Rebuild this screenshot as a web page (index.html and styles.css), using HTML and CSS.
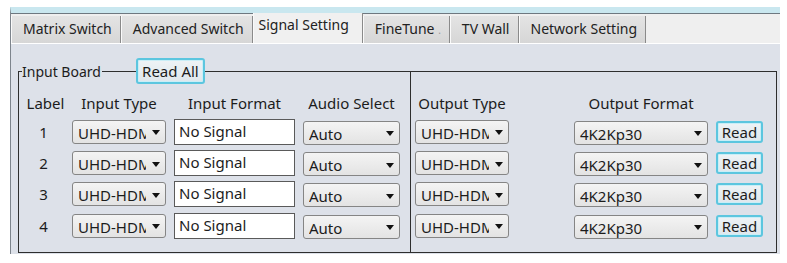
FILE: index.html
```html
<!DOCTYPE html>
<html lang="en">
<head>
    <meta charset="UTF-8">
    <title>Signal Setting</title>
    <link rel="stylesheet" href="styles.css">
</head>
<body>
    <div class="window">
        <div class="tabs">
            <div class="tab">Matrix Switch</div>
            <div class="tab">Advanced Switch</div>
            <div class="tab active">Signal Setting</div>
            <div class="tab">FineTune <span class="dot">.</span></div>
            <div class="tab">TV Wall</div>
            <div class="tab">Network Setting</div>
        </div>

        <div class="panel">
            <div class="group">
                <div class="group-head">
                    <span class="edge left"></span>
                    <span class="group-title">Input Board</span>
                    <span class="rule short"></span>
                    <button class="btn read-all">Read All</button>
                    <span class="rule fill"></span>
                    <span class="edge right"></span>
                </div>

                <div class="group-body">
                    <div class="side input-side">
                        <div class="head label-col">Label</div>
                        <div class="head">Input Type</div>
                        <div class="head">Input Format</div>
                        <div class="head">Audio Select</div>

                        <div class="num">1</div>
                        <div class="select"><span class="value">UHD-HDMI</span><span class="arrow"></span></div>
                        <div class="textbox">No Signal</div>
                        <div class="select audio"><span class="value">Auto</span><span class="arrow"></span></div>

                        <div class="num">2</div>
                        <div class="select"><span class="value">UHD-HDMI</span><span class="arrow"></span></div>
                        <div class="textbox">No Signal</div>
                        <div class="select audio"><span class="value">Auto</span><span class="arrow"></span></div>

                        <div class="num">3</div>
                        <div class="select"><span class="value">UHD-HDMI</span><span class="arrow"></span></div>
                        <div class="textbox">No Signal</div>
                        <div class="select audio"><span class="value">Auto</span><span class="arrow"></span></div>

                        <div class="num">4</div>
                        <div class="select"><span class="value">UHD-HDMI</span><span class="arrow"></span></div>
                        <div class="textbox">No Signal</div>
                        <div class="select audio"><span class="value">Auto</span><span class="arrow"></span></div>
                    </div>

                    <div class="side output-side">
                        <div class="head out-type">Output Type</div>
                        <div class="head">Output Format</div>
                        <div></div>

                        <div class="select out-type"><span class="value">UHD-HDMI</span><span class="arrow"></span></div>
                        <div class="select audio"><span class="value">4K2Kp30</span><span class="arrow"></span></div>
                        <button class="btn read">Read</button>

                        <div class="select out-type"><span class="value">UHD-HDMI</span><span class="arrow"></span></div>
                        <div class="select audio"><span class="value">4K2Kp30</span><span class="arrow"></span></div>
                        <button class="btn read">Read</button>

                        <div class="select out-type"><span class="value">UHD-HDMI</span><span class="arrow"></span></div>
                        <div class="select audio"><span class="value">4K2Kp30</span><span class="arrow"></span></div>
                        <button class="btn read">Read</button>

                        <div class="select out-type"><span class="value">UHD-HDMI</span><span class="arrow"></span></div>
                        <div class="select audio"><span class="value">4K2Kp30</span><span class="arrow"></span></div>
                        <button class="btn read">Read</button>
                    </div>
                </div>
            </div>
        </div>
    </div>
</body>
</html>
```

FILE: styles.css
```css
/* Reset */
* {
    margin: 0;
    padding: 0;
    box-sizing: border-box;
}

body {
    font-family: "Noto Sans", Arial, sans-serif;
    font-size: 15px;
    color: #1c1c1c;
    background: #ffffff;
}

.window {
    width: 770px;
    margin: 7px 0 0 10px;
    border-top: 6px solid #c9e7ef;
    border-left: 1px solid #7d848c;
}

/* Tabs */
.tabs {
    display: flex;
    align-items: flex-end;
    height: 31px;
    background: #efefef;
    border-top: 1px solid #6e7880;
    border-bottom: 1px solid #ffffff;
}

.tab {
    height: 27px;
    line-height: 26px;
    padding: 0 8px 0 11px;
    font-size: 14px;
    color: #222;
    background: linear-gradient(#e4e4e4, #d6d6d6);
    border-right: 1px solid #8a8a8a;
    border-left: 1px solid #fafafa;
    white-space: nowrap;
}

.tab.active {
    height: 30px;
    line-height: 24px;
    padding: 0 13px 0 5px;
    background: #f0f0f0;
}

.tab .dot {
    font-size: 10px;
    color: #999;
}

/* Panel */
.panel {
    height: 210px;
    background: #dde1e9;
    padding: 14px 3px 1px 7px;
}

.group-head {
    display: flex;
    align-items: center;
    height: 26px;
}

.edge {
    align-self: flex-end;
    width: 4px;
    height: 13px;
    border-top: 1px solid #2e2e2e;
}

.edge.left {
    border-left: 1px solid #2e2e2e;
}

.edge.right {
    width: 1px;
    border-right: 1px solid #2e2e2e;
}

.group-title {
    font-size: 14px;
    padding: 0 1px 0 0;
}

.rule {
    height: 1px;
    background: #2e2e2e;
    margin-top: 1px;
}

.rule.short {
    width: 34px;
}

.rule.fill {
    flex: 1;
}

.btn {
    font-family: inherit;
    font-size: 15px;
    color: #1c1c1c;
    border: 2px solid #5cc6df;
    border-radius: 3px;
    background: linear-gradient(#eef3f6, #dfe7ec);
    box-shadow: inset 0 0 0 1px #c9eef7;
    cursor: pointer;
}

.read-all {
    width: 69px;
    height: 26px;
    line-height: 20px;
}

.group-body {
    display: flex;
    height: 169px;
    border: 1px solid #2e2e2e;
    border-top: none;
}

.side {
    display: grid;
    grid-template-rows: 20px repeat(4, 25px);
    row-gap: 6.3px;
    align-items: center;
    padding-top: 9px;
}

.input-side {
    width: 391px;
    grid-template-columns: 45px 94px 121px 97px;
    column-gap: 8px;
}

.output-side {
    flex: 1;
    grid-template-columns: 151px 134px 47px;
    column-gap: 8px;
    margin-top: -13px;
    padding: 22px 0 0 4px;
    border-left: 1px solid #2e2e2e;
}

.head {
    text-align: center;
    white-space: nowrap;
}

.head.label-col {
    margin-right: -8px;
}

.head.out-type,
.select.out-type {
    width: 94px;
}

.num {
    text-align: center;
    padding-left: 8px;
    padding-right: 4px;
}

.select {
    display: flex;
    align-items: center;
    height: 24px;
    padding: 2px 5px 0 5px;
    border: 1px solid #858585;
    border-radius: 3px;
    background: linear-gradient(#f4f4f4, #e3e3e3);
}

.select.audio {
    margin-top: 2px;
}

.select .value {
    flex: 1;
    overflow: hidden;
    white-space: nowrap;
}

.select .arrow {
    width: 0;
    height: 0;
    margin-left: 6px;
    border-left: 4px solid transparent;
    border-right: 4px solid transparent;
    border-top: 5px solid #111;
}

.textbox {
    height: 26px;
    padding: 0 4px;
    line-height: 22px;
    background: #ffffff;
    border: 1px solid #5a5a5a;
    white-space: nowrap;
}

.read {
    height: 22px;
    line-height: 16px;
}
```
